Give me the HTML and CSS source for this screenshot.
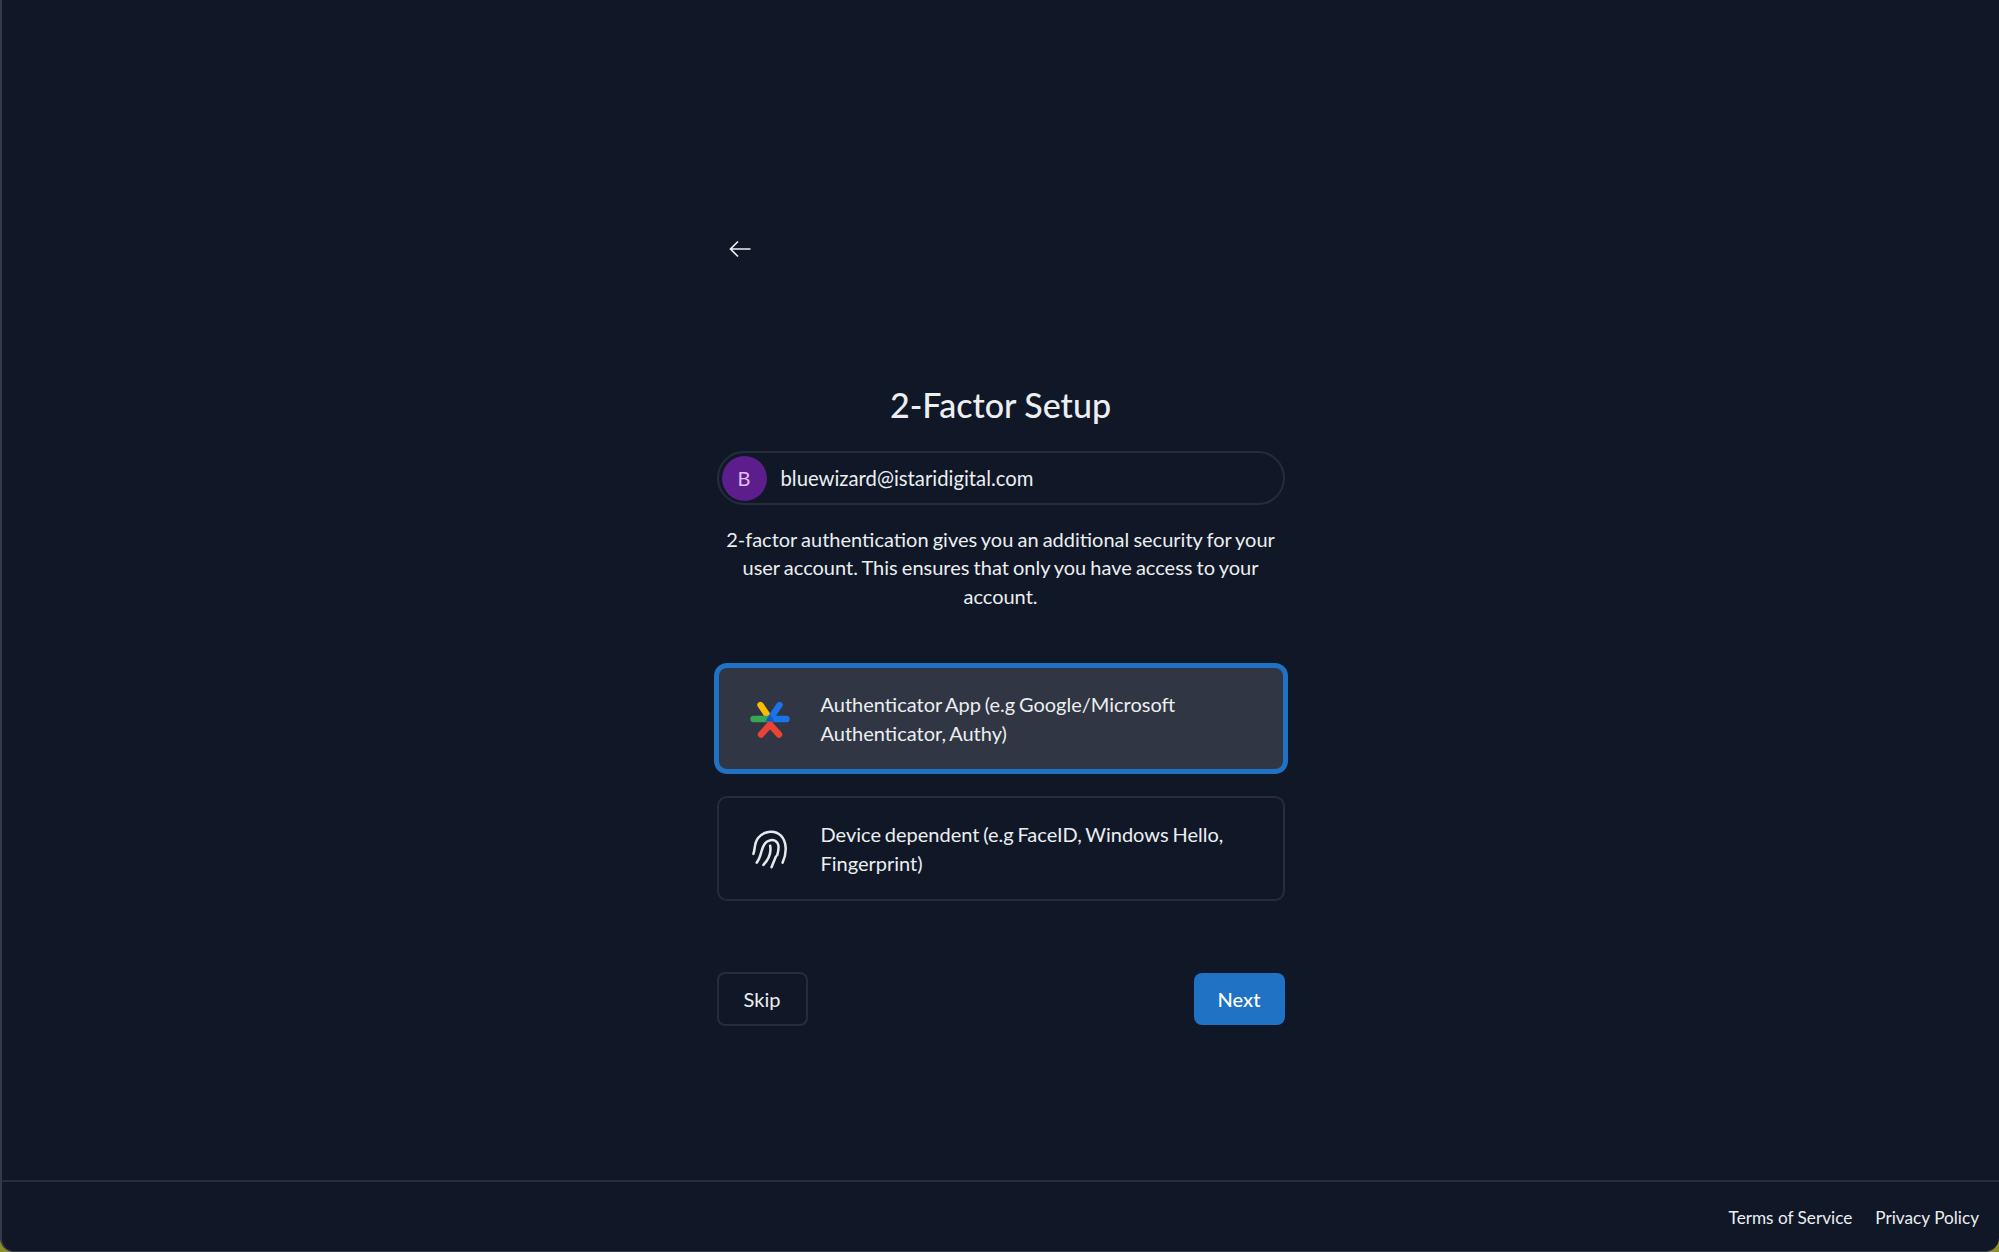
FILE: index.html
```html
<!DOCTYPE html>
<html lang="en">

<head>
    <meta charset="UTF-8">
    <meta name="viewport" content="width=device-width, initial-scale=1.0">
    <title>2-Factor Setup</title>
    <link rel="stylesheet" href="styles.css">
</head>

<body>
    <div class="window">
        <main class="content">
            <div class="setup">
                <button class="back" aria-label="Back">
                    <svg width="22" height="18" viewBox="0 0 22 18" fill="none" stroke="currentColor" stroke-width="1.7">
                        <path d="M21.5 9H1.5M9 1.5L1.5 9L9 16.5" />
                    </svg>
                </button>

                <h1 class="title">2-Factor Setup</h1>

                <div class="account">
                    <span class="avatar">B</span>
                    <span class="email">bluewizard@istaridigital.com</span>
                </div>

                <p class="intro">2-factor authentication gives you an additional security for your user account. This ensures that only you have access to your account.</p>

                <div class="options">
                    <div class="option selected">
                        <svg class="option-icon" width="40" height="38" viewBox="0 0 40 38" fill="none" stroke-width="6.4" stroke-linecap="round">
                            <path d="M10.500 5L20 19" stroke="#fbbc04" />
                            <path d="M3.500 19H20" stroke="#34a853" />
                            <path d="M29.500 5L20 19H36.500" stroke="#1a73e8" stroke-linejoin="round" />
                            <path d="M11 34.500L20 24.500L29 34.500" stroke="#ea4335" stroke-linecap="round" stroke-linejoin="round" />
                            <path d="M20 14L15.500 21.500H24.500Z" fill="#185abc" stroke="none" />
                        </svg>
                        <span class="option-label">Authenticator App (e.g Google/Microsoft Authenticator, Authy)</span>
                    </div>
                    <div class="option">
                        <svg class="option-icon" width="38" height="42" viewBox="60 55 115 125" fill="none" stroke="#e8e9ec" stroke-width="7.500" stroke-linecap="round">
                            <path d="M68 132C74 116 70 100 82 85C95 66 130 58 150 78C168 96 168 130 155 158" />
                            <path d="M78 158C92 140 90 120 100 105C108 90 130 85 140 100C146 110 143 122 139 136" />
                            <path d="M98 165C112 150 122 130 118 108" />
                            <path d="M135 140L122 172" />
                        </svg>
                        <span class="option-label">Device dependent (e.g FaceID, Windows Hello, Fingerprint)</span>
                    </div>
                </div>

                <div class="actions">
                    <button class="btn btn-skip">Skip</button>
                    <button class="btn btn-next">Next</button>
                </div>
            </div>
        </main>

        <footer class="footer">
            <a href="#">Terms of Service</a>
            <a href="#">Privacy Policy</a>
        </footer>
    </div>
</body>

</html>
```

FILE: styles.css
```css
:root {
    --bg-color: #101828;
    --line-color: #262c3a;
    --text-color: #eceef0;
    --blue-color: #1f72c4;
}

* {
    margin: 0;
    padding: 0;
    box-sizing: border-box;
    font-family: Lato, 'Open Sans', sans-serif;
}

body {
    height: 100vh;
    overflow: hidden;
    background-color: #8a8f2c;
}

.window {
    height: 100%;
    display: flex;
    flex-direction: column;
    padding-bottom: 2px;
    background-color: var(--bg-color);
    border-left: 2px solid #333a48;
    border-bottom: 1px solid #333a48;
    border-radius: 0 0 14px 14px;
    color: var(--text-color);
}

.content {
    flex: 1;
    display: flex;
    justify-content: center;
}

.setup {
    width: 568px;
    padding-top: 234px;
}

.back {
    display: block;
    margin-left: 12px;
    height: 32px;
    background: none;
    border: none;
    color: var(--text-color);
}

.title {
    margin-top: 117px;
    font-size: 34px;
    font-weight: 500;
    line-height: 44px;
    text-align: center;
}

.account {
    display: flex;
    align-items: center;
    gap: 14px;
    height: 54px;
    margin-top: 24px;
    padding: 0 3px;
    border: 2px solid var(--line-color);
    border-radius: 27px;
}

.avatar {
    width: 45px;
    height: 45px;
    border-radius: 50%;
    background-color: #5b1e8c;
    color: #e2bdf7;
    font-size: 20px;
    line-height: 45px;
    text-align: center;
}

.email {
    font-size: 20.3px;
}

.intro {
    margin-top: 20px;
    font-size: 20px;
    line-height: 28.4px;
    word-spacing: -1px;
    text-align: center;
}

.options {
    display: flex;
    flex-direction: column;
    gap: 25px;
    margin-top: 56px;
}

.option {
    display: flex;
    align-items: center;
    height: 105px;
    padding: 0 31px;
    border: 2px solid var(--line-color);
    border-radius: 10px;
    font-size: 20px;
    line-height: 28.4px;
    word-spacing: -1.3px;
}

.option.selected {
    background-color: #303644;
    border-color: var(--blue-color);
    box-shadow: 0 0 0 3px var(--blue-color);
}

.option-icon {
    flex: none;
    width: 40px;
    margin-right: 31px;
}

.option-label {
    max-width: 420px;
}

.actions {
    display: flex;
    justify-content: space-between;
    align-items: center;
    margin-top: 71px;
}

.btn {
    width: 91px;
    border-radius: 8px;
    font-size: 20px;
    color: var(--text-color);
}

.btn-skip {
    height: 54px;
    background: none;
    border: 2px solid var(--line-color);
}

.btn-next {
    height: 52px;
    background-color: var(--blue-color);
    border: none;
    color: white;
    font-weight: 500;
}

.footer {
    display: flex;
    justify-content: flex-end;
    align-items: center;
    gap: 23px;
    height: 69px;
    padding: 3px 20px 0 0;
    border-top: 2px solid var(--line-color);
}

.footer a {
    font-size: 17.2px;
    color: var(--text-color);
    text-decoration: none;
}
```
